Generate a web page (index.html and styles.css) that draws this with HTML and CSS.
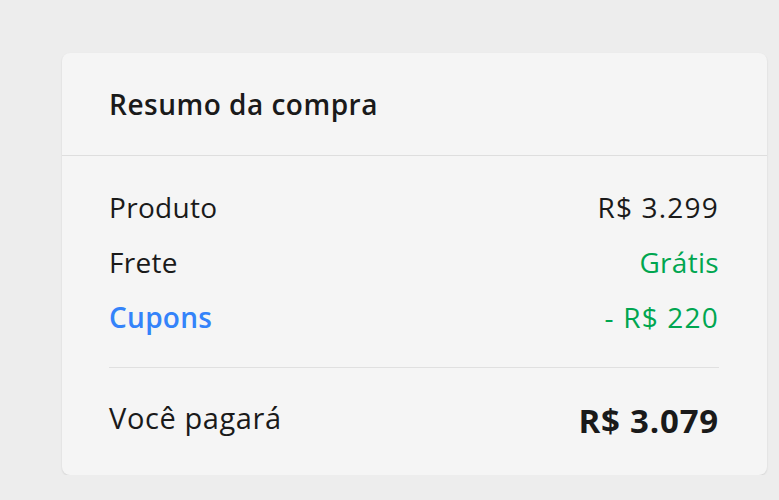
FILE: index.html
```html
<!DOCTYPE html>
<html lang="pt-BR">
<head>
    <meta charset="UTF-8">
    <meta name="viewport" content="width=device-width, initial-scale=1.0">
    <title>Resumo da compra</title>
    <link rel="stylesheet" href="styles.css">
</head>
<body>
    <div class="summary">
        <div class="summary-header">
            <h2>Resumo da compra</h2>
        </div>

        <div class="summary-body">
            <div class="row">
                <span>Produto</span>
                <span class="price">R$ 3.299</span>
            </div>
            <div class="row">
                <span>Frete</span>
                <span class="green">Grátis</span>
            </div>
            <div class="row">
                <span class="blue">Cupons</span>
                <span class="green price">- R$ 220</span>
            </div>

            <div class="total">
                <span>Você pagará</span>
                <span class="total-value">R$ 3.079</span>
            </div>
        </div>
    </div>
</body>
</html>
```

FILE: styles.css
```css
body {
    font-family: "Open Sans", Arial, sans-serif;
    background-color: #ededed;
    margin: 0;
    padding: 53px 12px 0 62px;
    color: #1a1a1a;
}

.summary {
    background: #f5f5f5;
    border-radius: 8px;
    box-shadow: 0 1px 2px rgba(0, 0, 0, 0.12);
    height: 422px;
}

.summary-header {
    height: 102px;
    padding: 0 48px 0 47px;
    display: flex;
    align-items: center;
    border-bottom: 1px solid #dedede;
}

h2 {
    margin: 0;
    font-size: 28px;
    font-weight: 600;
    letter-spacing: 0.5px;
}

.summary-body {
    padding: 23px 48px 0 47px;
}

.row {
    display: flex;
    justify-content: space-between;
    align-items: center;
    height: 55px;
    font-size: 28px;
    letter-spacing: 0.3px;
}

.price {
    letter-spacing: 1.2px;
}

.green {
    color: #00a650;
}

.blue {
    color: #3483fa;
    font-weight: 600;
}

.total {
    display: flex;
    justify-content: space-between;
    align-items: center;
    border-top: 1px solid #e0e0e0;
    margin-top: 23px;
    padding-top: 24px;
    font-size: 29px;
    letter-spacing: 0.6px;
}

.total-value {
    font-size: 33px;
    font-weight: 700;
    margin-top: 6px;
    letter-spacing: 0.8px;
}
```
